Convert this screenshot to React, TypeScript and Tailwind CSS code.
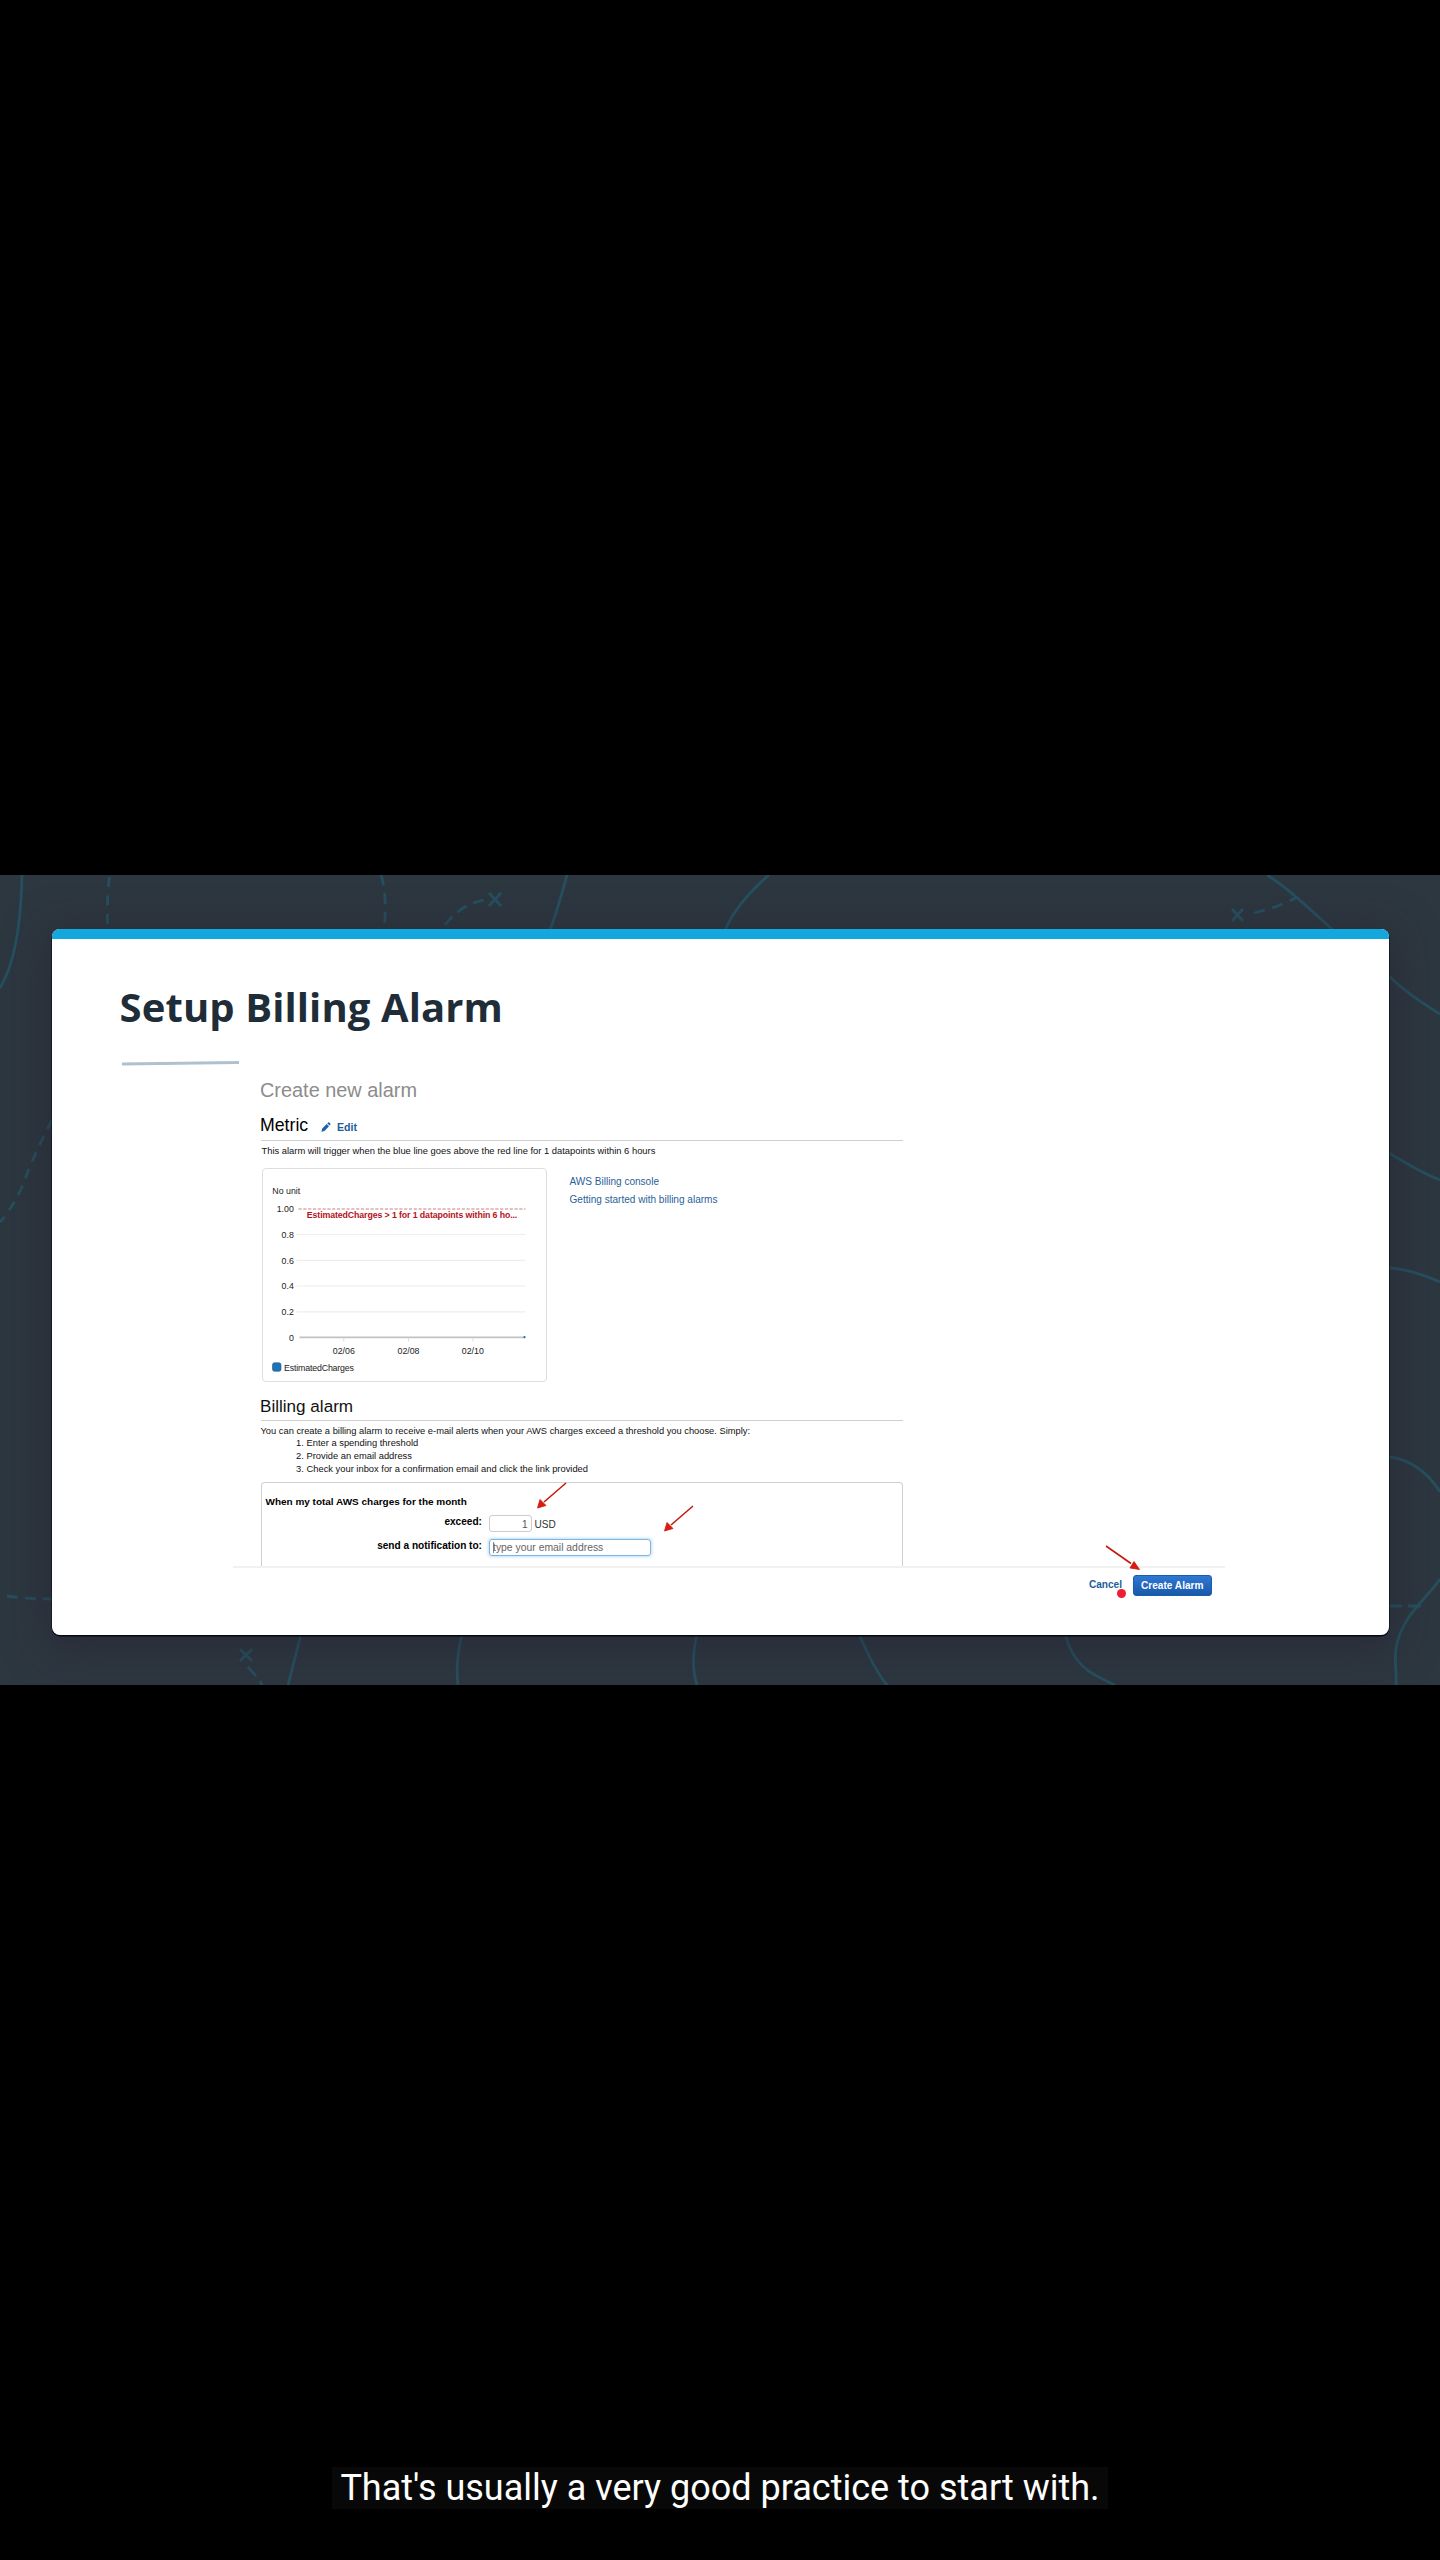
import type { ReactNode } from "react";

function Backdrop() {
  return (
    <svg
      className="absolute inset-0 h-full w-full"
      viewBox="0 875 1440 810"
      fill="none"
      stroke="#26505f"
      strokeWidth="2.8"
    >
      <path d="M22 875C21 930 14 965 0 988" />
      <path d="M109.500 877C107 895 107.500 912 107.500 924" strokeDasharray="10 8.500" />
      <path d="M381 875C386 890 386 912 384 930" strokeDasharray="11 7.500" />
      <path d="M445 925C455 912 468 903 484 900" strokeDasharray="11 7" />
      <path d="M489 893L501 906M501 893L489 906" />
      <path d="M567 875C562 893 557 912 550 930" />
      <path d="M769 875C749 892 734 910 725 930" />
      <path d="M1267 875C1288 888 1305 905 1333 930" />
      <path d="M1254 913C1270 909 1283 905 1297 897" strokeDasharray="11 8" />
      <path d="M1232 909L1243 921M1243 909L1232 921" />
      <path d="M1389 976C1403 990 1422 1003 1440 1014" />
      <path d="M52 1120C39 1145 30 1165 22 1187C16 1200 9 1212 0 1222" strokeDasharray="10 8" />
      <path d="M1389 1153C1407 1164 1422 1173 1440 1180" />
      <path d="M1389 1268C1407 1269 1422 1274 1440 1282" />
      <path d="M1389 1457C1409 1459 1428 1472 1440 1492" />
      <path d="M1440 1579C1426 1600 1402 1615 1396 1648C1394 1663 1397 1673 1396 1685" />
      <path d="M1389 1606H1402M1408 1606H1421" />
      <path d="M7 1596Q28 1599 52 1599" strokeDasharray="11 7" />
      <path d="M240 1649L252 1661M252 1649L240 1661" />
      <path d="M248 1667L256 1676M260 1681L263 1687" />
      <path d="M301 1634L288 1685" />
      <path d="M462 1634C457 1655 456 1670 458 1685" />
      <path d="M697 1634C692 1655 692 1670 697 1685" />
      <path d="M859 1634C868 1655 876 1672 887 1685" />
      <path d="M1065 1634C1073 1665 1090 1674 1115 1685" />
    </svg>
  );
}

function Arrow({ className, flip }: { className: string; flip?: boolean }) {
  return (
    <svg className={className} viewBox="0 0 36 30" fill="#e0190f" stroke="#c41a10">
      {flip ? (
        <>
          <path d="M1 2L26 19.500" strokeWidth="1.600" />
          <path d="M34.500 25.500L29 17.500L25 24Z" strokeWidth="0.800" />
        </>
      ) : (
        <>
          <path d="M31 2L9 21" strokeWidth="1.600" />
          <path d="M2.500 27L5 18.500L11 24.500Z" strokeWidth="0.800" />
        </>
      )}
    </svg>
  );
}

const GRID = [
  { label: "0.8", y: 67 },
  { label: "0.6", y: 92.8 },
  { label: "0.4", y: 118.5 },
  { label: "0.2", y: 144.3 },
];
const DATES = [
  { label: "02/06", x: 82.3 },
  { label: "02/08", x: 147 },
  { label: "02/10", x: 211.3 },
];

function Chart() {
  return (
    <svg
      className="block h-[211px] w-[282px] overflow-visible font-['Liberation_Sans',sans-serif] text-[8.8px]"
      viewBox="1.5 1.5 282 211"
      fill="#222"
    >
      <text x="10.800" y="26" textLength="28">No unit</text>
      <text x="32.300" y="44.500" textAnchor="end">1.00</text>
      <path d="M37 41.500H264" stroke="#cf8080" strokeWidth="1.200" strokeDasharray="3.200 1.600" />
      <text x="45.300" y="50.500" fill="#b5121b" className="font-bold" textLength="210.500">
        EstimatedCharges &gt; 1 for 1 datapoints within 6 ho...
      </text>
      {GRID.map((g) => (
        <g key={g.label}>
          <text x="32.300" y={g.y + 3.2} textAnchor="end">{g.label}</text>
          <path d={`M35 ${g.y}H264`} stroke="#eeeeee" strokeWidth="1.200" />
        </g>
      ))}
      <text x="32.300" y="173.300" textAnchor="end">0</text>
      <path d="M38 169.900H263" stroke="#c2c2c2" strokeWidth="1.600" />
      <circle cx="263" cy="169.700" r="1.100" fill="#1f6fae" />
      {DATES.map((d) => (
        <g key={d.label}>
          <path d={`M${d.x} 171V174`} stroke="#ddd" />
          <text x={d.x} y="186.300" textAnchor="middle">{d.label}</text>
        </g>
      ))}
      <rect x="11" y="195.300" width="8.500" height="8.500" rx="2" fill="#1f73b4" stroke="#175a91" strokeWidth="0.600" />
      <text x="22.500" y="203" textLength="70">EstimatedCharges</text>
    </svg>
  );
}

function Step({ n, children }: { n: number; children: ReactNode }) {
  return (
    <li className="flex h-[13px] text-[9.36px] leading-[13px]">
      <span className="w-[10.5px]">{n}.</span>
      <span>{children}</span>
    </li>
  );
}

function Slide() {
  return (
    <div className="relative flex h-[705.5px] w-[1337px] flex-col overflow-hidden rounded-[8px] bg-white">
      <div className="h-[9.500px] shrink-0 bg-[#12a8dd]" />
      <h1 className="mt-[41px] ml-[67.6px] h-[54px] font-['Open_Sans',sans-serif] text-[40px] leading-[54px] font-bold tracking-[0.1px] whitespace-nowrap text-[#1f2d38]">
        Setup Billing Alarm
      </h1>
      <svg className="mt-[26px] ml-[69px] h-[6px] w-[120px] shrink-0" viewBox="0 0 120 6">
        <path d="M1 4L118 2.500" stroke="#b1c0cd" strokeWidth="3" />
      </svg>

      <div className="mt-[12px] ml-[181px] flex w-[992px] flex-col whitespace-nowrap text-[#111] font-['Liberation_Sans',sans-serif]">
        <div className="relative ml-[27.5px] flex h-[488px] w-[642px] flex-col">
          <h2 className="-ml-[0.5px] h-[24px] text-[19.9px] leading-[24px] text-[#8c8c8c]">Create new alarm</h2>
          <div className="-ml-[0.5px] mt-[13px] flex h-[20px] leading-[20px]">
            <span className="w-[61px] text-[17.7px] text-black">Metric</span>
            <svg className="mt-[7px] h-[10px] w-[10px]" viewBox="0 0 10 10" fill="#1d63a5">
              <path d="M0.500 9.700L1.200 6.500L5.700 2L8 4.300L3.500 8.900ZM6.300 1.400L7.100 0.600Q7.700 0.100 8.300 0.600L9.300 1.600Q9.800 2.200 9.300 2.800L8.600 3.600Z" />
            </svg>
            <span className="ml-[6px] pt-[2px] text-[10.6px] font-bold text-[#1d5c9c]">Edit</span>
          </div>
          <div className="mt-[5px] h-px shrink-0 bg-[#cfcfcf]" />
          <p className="mt-[4px] ml-px h-[12px] text-[9.37px] leading-[12px]">
            This alarm will trigger when the blue line goes above the red line for 1 datapoints within 6 hours
          </p>
          <div className="mt-[11px] ml-px flex h-[214px]">
            <div className="w-[285px] shrink-0 rounded-[4px] border-[1.500px] border-[#dedede]">
              <Chart />
            </div>
            <div className="mt-[5px] ml-[23px] flex flex-col text-[10.05px] leading-[18px] text-[#2a5f9a]">
              <a>AWS Billing console</a>
              <a>Getting started with billing alarms</a>
            </div>
          </div>
          <h3 className="-ml-[0.5px] mt-[15px] h-[20px] text-[17.1px] leading-[20px] text-[#111]">Billing alarm</h3>
          <div className="mt-[3px] h-px shrink-0 bg-[#cfcfcf]" />
          <p className="mt-[4px] h-[12px] text-[9.32px] leading-[12px]">
            You can create a billing alarm to receive e-mail alerts when your AWS charges exceed a threshold you choose. Simply:
          </p>
          <ol className="ml-[35.500px]">
            <Step n={1}>Enter a spending threshold</Step>
            <Step n={2}>Provide an email address</Step>
            <Step n={3}>Check your inbox for a confirmation email and click the link provided</Step>
          </ol>
          <div className="mt-[6px] h-[84px] rounded-t-[4px] border border-b-0 border-[#d0d0d0] pt-[12px] pl-[4px] text-[10.1px] text-black">
            <p className="h-[14px] text-[9.98px] leading-[14px] font-bold">When my total AWS charges for the month</p>
            <div className="mt-[6px] flex h-[17px]">
              <span className="w-[216.5px] text-right leading-[13px] font-bold">exceed:</span>
              <div className="ml-[6.500px] h-[17px] w-[43px] rounded-[3px] border border-[#ccc] pr-[3px] text-right leading-[17px] text-[#555]">
                1
              </div>
              <span className="ml-[3px] leading-[19px] text-[#333]">USD</span>
            </div>
            <div className="mt-[7px] flex h-[17px]">
              <span className="w-[216.5px] text-right leading-[13px] font-bold">send a notification to:</span>
              <div className="ml-[6.5px] flex h-[17px] w-[162.500px] items-center rounded-[3px] border border-[#7fb4de] pl-[3px] text-[10.4px] leading-[17px] text-[#666] shadow-[0_0_3px_1px_#bfe0f7]">
                <span className="h-[11px] w-[0.5px] bg-[#888]" />
                <span className="pt-px">type your email address</span>
              </div>
            </div>
          </div>
          <Arrow className="absolute top-[403px] left-[274px] h-[30px] w-[36px]" />
          <Arrow className="absolute top-[426px] left-[401px] h-[30px] w-[36px]" />
        </div>
        <div className="relative flex h-[40px] justify-end border-t-2 border-[#f1f1f1] pt-[7px] pr-[13.5px] text-[10.1px] font-bold">
          <span className="mr-[11px] leading-[19px] text-[#1d5c9c]">Cancel</span>
          <button className="h-[21.5px] w-[78.500px] rounded-[3px] border border-[#1b5cab] bg-gradient-to-b from-[#2f78d3] to-[#1859ab] text-center leading-[20px] text-white">
            Create Alarm
          </button>
          <span className="absolute top-[21.500px] left-[883.500px] h-[9px] w-[9px] rounded-full bg-[#ee1c35]" />
          <Arrow flip className="absolute -top-[24px] left-[872px] h-[30px] w-[36px]" />
        </div>
      </div>
    </div>
  );
}

export default function App() {
  return (
    <div className="flex h-[2560px] w-[1440px] flex-col items-center overflow-hidden bg-black">
      <div className="relative mt-[875px] h-[810px] w-[1440px] shrink-0 overflow-hidden bg-[#2d3740]">
        <Backdrop />
        <div className="relative mt-[54px] ml-[52px] h-[705.5px] w-[1337px] rounded-[8px] shadow-[0_1px_0_0.500px_#05090d,0_8px_40px_6px_rgba(37,34,50,0.5)]">
          <Slide />
        </div>
      </div>
      <div className="mt-[782px] flex h-[42px] w-[776px] shrink-0 items-center justify-center bg-[#080808] font-['Roboto',sans-serif] text-[36px] leading-[42px] whitespace-nowrap text-white">
        That's usually a very good practice to start with.
      </div>
    </div>
  );
}
